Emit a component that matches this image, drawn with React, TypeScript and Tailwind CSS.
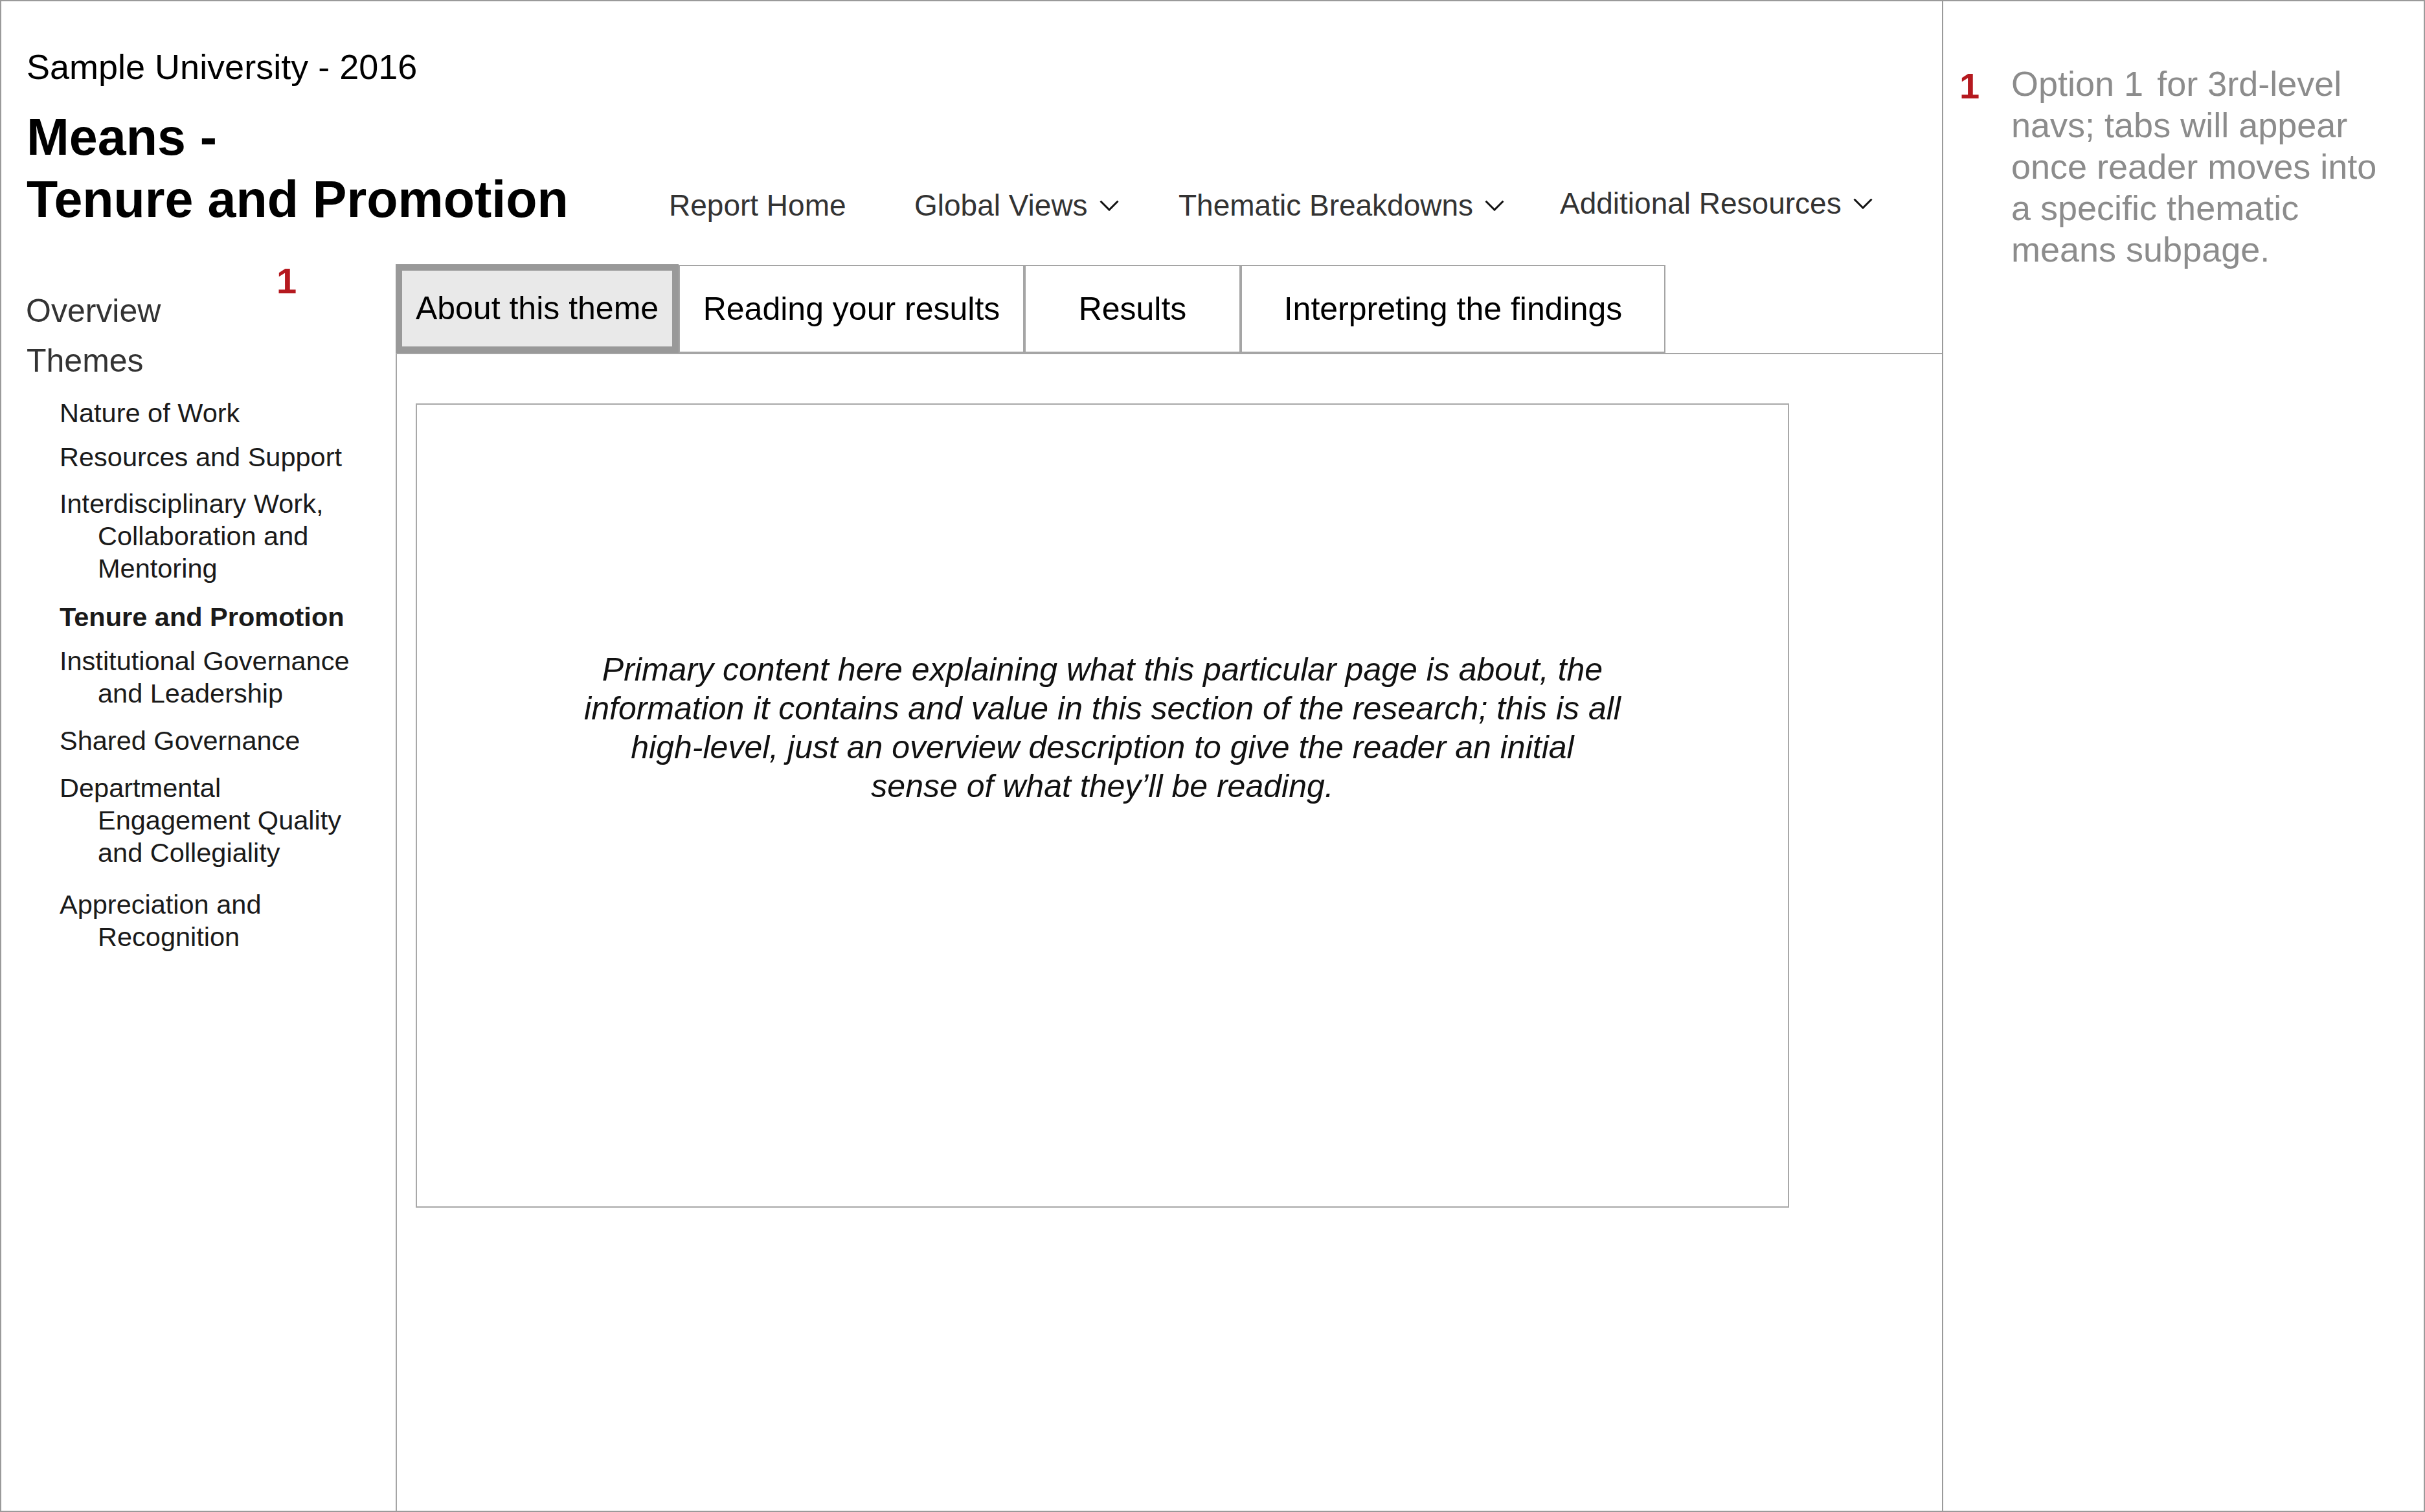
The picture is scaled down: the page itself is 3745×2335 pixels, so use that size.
import React from 'react';

const navItems = [
  { label: 'Report Home', width: 'w-[379px]', chevron: false },
  { label: 'Global Views', width: 'w-[408px]', chevron: true },
  { label: 'Thematic Breakdowns', width: 'w-[589px]', chevron: true },
  { label: 'Additional Resources', width: '', chevron: true },
];

const themes: { lines: string[]; gap: string; bold?: boolean }[] = [
  { lines: ['Nature of Work'], gap: 'mt-[17px]' },
  { lines: ['Resources and Support'], gap: 'mt-[18px]' },
  { lines: ['Interdisciplinary Work,', 'Collaboration and', 'Mentoring'], gap: 'mt-[22px]' },
  { lines: ['Tenure and Promotion'], gap: 'mt-[25px]', bold: true },
  { lines: ['Institutional Governance', 'and Leadership'], gap: 'mt-[18px]' },
  { lines: ['Shared Governance'], gap: 'mt-[23px]' },
  { lines: ['Departmental', 'Engagement Quality', 'and Collegiality'], gap: 'mt-[23px]' },
  { lines: ['Appreciation and', 'Recognition'], gap: 'mt-[30px]' },
];

const tabs = [
  { label: 'Reading your results', width: 'w-[534px]' },
  { label: 'Results', width: 'w-[334px]' },
  { label: 'Interpreting the findings', width: 'w-[656px]' },
];

function Chevron() {
  return (
    <svg width="30" height="17" viewBox="0 0 30 17" className="ml-[18px] shrink-0">
      <polyline points="1.5,1.5 15,15 28.5,1.5" fill="none" stroke="#111" strokeWidth="3" />
    </svg>
  );
}

export default function App() {
  return (
    <div className="w-[3745px] h-[2335px] flex border-2 border-[#9a9a9a] bg-white font-['Liberation_Sans',Arial,sans-serif] overflow-hidden">
      {/* Main column */}
      <div className="w-[2997px] shrink-0 flex flex-col">
        {/* Header */}
        <div className="h-[406px] shrink-0 flex items-start pl-[39px] pt-[70px]">
          <div className="w-[992px] shrink-0">
            <div className="text-[54px] leading-[62px] text-black">Sample University - 2016</div>
            <h1 className="mt-[30px] text-[79px] leading-[96px] font-bold text-black">
              Means -
              <br />
              Tenure and Promotion
            </h1>
          </div>
          <nav className="flex items-start mt-[217px] text-[46px] leading-[56px] text-[#333] whitespace-nowrap">
            {navItems.map(item => (
              <div
                key={item.label}
                className={`${item.width} shrink-0 flex items-center ${item.label === 'Additional Resources' ? '-mt-[3px]' : ''}`}
              >
                <span>{item.label}</span>
                {item.chevron && <Chevron />}
              </div>
            ))}
          </nav>
        </div>

        {/* Body */}
        <div className="flex-1 flex min-h-0">
          {/* Sidebar */}
          <aside className="w-[609px] shrink-0 pl-[39px]">
            <div className="h-[34px] ml-[386px] text-[56px] leading-[52px] font-bold text-[#b5191f]">1</div>
            <div className="text-[50px] leading-[77px] text-[#333] -ml-[1px]">Overview</div>
            <div className="text-[50px] leading-[77px] text-[#333]">Themes</div>
            <ul className="text-[41.5px] leading-[50px] text-[#1a1a1a]">
              {themes.map(t => (
                <li
                  key={t.lines[0]}
                  className={`${t.gap} pl-[110px] indent-[-59px] ${t.bold ? 'font-bold' : ''}`}
                >
                  {t.lines.map((l, i) => (
                    <React.Fragment key={l}>
                      {i > 0 && <br />}
                      {l}
                    </React.Fragment>
                  ))}
                </li>
              ))}
            </ul>
          </aside>

          {/* Content */}
          <section className="flex-1 flex flex-col min-w-0">
            <div className="h-[137px] shrink-0 flex">
              <div className="w-[437px] h-full flex items-center justify-center border-[10px] border-[#999] bg-[#e9e9e9] text-[50px] text-black">
                About this theme
              </div>
              {tabs.map(tab => (
                <div
                  key={tab.label}
                  className={`${tab.width} mt-[1px] flex items-center justify-center border-2 border-[#a5a5a5] text-[50px] text-black`}
                >
                  {tab.label}
                </div>
              ))}
            </div>
            <div className="flex-1 border-t-2 border-l-2 border-[#a5a5a5]">
              <div className="ml-[29px] mt-[76px] w-[2121px] h-[1242px] border-2 border-[#a8a8a8] pt-[379px] text-center italic text-[50px] leading-[60px] text-[#111]">
                Primary content here explaining what this particular page is about, the
                <br />
                information it contains and value in this section of the research; this is all
                <br />
                high-level, just an overview description to give the reader an initial
                <br />
                sense of what they’ll be reading.
              </div>
            </div>
          </section>
        </div>
      </div>

      {/* Annotation panel */}
      <div className="flex-1 border-l-2 border-[#9a9a9a] pl-[25px] pt-[95px]">
        <div className="flex items-start">
          <div className="w-[80px] shrink-0 mt-[4px] text-[56px] leading-[64px] font-bold text-[#b5191f]">1</div>
          <p className="text-[54px] leading-[64px] text-[#8c8c8c]">
            Option 1 <span className="inline-block w-[6px]" />for 3rd-level
            <br />
            navs; tabs will appear
            <br />
            once reader moves into
            <br />
            a specific thematic
            <br />
            means subpage.
          </p>
        </div>
      </div>
    </div>
  );
}
